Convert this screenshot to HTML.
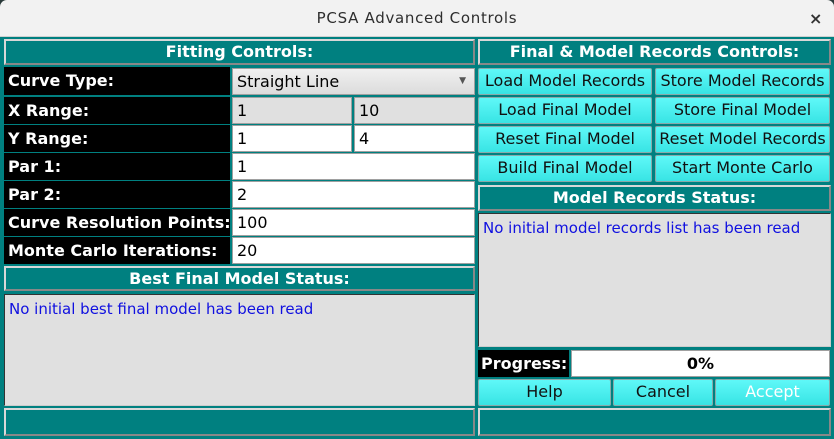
<!DOCTYPE html>
<html><head><style>
*{box-sizing:border-box;margin:0;padding:0}
body{width:834px;height:439px;overflow:hidden;background:#2a3a3a;font-family:"DejaVu Sans","Liberation Sans",sans-serif;font-size:16px;position:relative}
.a{position:absolute}
#title{left:0;top:0;width:834px;height:37px;background:#f2f2f2;border-radius:7px 7px 0 0;border-bottom:1px solid #d0d0d0;text-align:center;line-height:37px;font-size:15px;color:#2e2e2e;letter-spacing:0.7px}
#body{left:0;top:37px;width:834px;height:402px;background:#008080}
.hdr{background:#008080;border:2px solid #d8d8d8;border-right-color:#888;border-bottom-color:#888;color:#fff;font-weight:bold;text-align:center;line-height:21px}
.lbl{background:#000;color:#fff;font-weight:bold;padding-left:4px;line-height:27px;font-size:16px;white-space:nowrap}
.in{background:#fff;border:1px solid #a0a0a0;padding-left:4px;line-height:25px;color:#000}
.gr{background:#e0e0e0}
.btn{background:linear-gradient(#5ff8f8,#38e4e4);border:1px solid #8aa;border-radius:2px;text-align:center;line-height:24px;color:#111;white-space:nowrap}
.ta{background:#e0e0e0;border:1px solid #333;border-right-color:#ccc;border-bottom-color:#ccc;color:#1010e0;padding:5px 4px;font-size:15px}
.box{border:2px solid #d8d8d8;border-right-color:#888;border-bottom-color:#888}
</style></head><body>
<div class="a" id="title">PCSA Advanced Controls</div>
<div class="a" style="left:809px;top:9px;font-size:16px;font-weight:bold;color:#333">×</div>
<div class="a" id="body"></div>

<div class="a hdr" style="left:4px;top:39px;width:471px;height:26px">Fitting Controls:</div>
<div class="a lbl" style="left:4px;top:67px;width:226px;height:28px">Curve Type:</div>
<div class="a in" style="left:232px;top:68px;width:243px;height:27px;background:linear-gradient(#f0f0f0,#dcdcdc)">Straight Line<span style="position:absolute;right:8px;top:0;font-size:9px;color:#555">▼</span></div>
<div class="a lbl" style="left:4px;top:97px;width:226px;height:27px">X Range:</div>
<div class="a in gr" style="left:232px;top:97px;width:120px;height:27px">1</div>
<div class="a in gr" style="left:354px;top:97px;width:121px;height:27px">10</div>
<div class="a lbl" style="left:4px;top:125px;width:226px;height:27px">Y Range:</div>
<div class="a in" style="left:232px;top:125px;width:120px;height:27px">1</div>
<div class="a in" style="left:354px;top:125px;width:121px;height:27px">4</div>
<div class="a lbl" style="left:4px;top:153px;width:226px;height:27px">Par 1:</div>
<div class="a in" style="left:232px;top:153px;width:243px;height:27px">1</div>
<div class="a lbl" style="left:4px;top:181px;width:226px;height:27px">Par 2:</div>
<div class="a in" style="left:232px;top:181px;width:243px;height:27px">2</div>
<div class="a lbl" style="left:4px;top:209px;width:226px;height:27px">Curve Resolution Points:</div>
<div class="a in" style="left:232px;top:209px;width:243px;height:27px">100</div>
<div class="a lbl" style="left:4px;top:237px;width:226px;height:27px">Monte Carlo Iterations:</div>
<div class="a in" style="left:232px;top:237px;width:243px;height:27px">20</div>
<div class="a hdr" style="left:4px;top:266px;width:471px;height:25px">Best Final Model Status:</div>
<div class="a ta" style="left:4px;top:294px;width:471px;height:112px">No initial best final model has been read</div>
<div class="a box" style="left:4px;top:408px;width:471px;height:28px"></div>

<div class="a hdr" style="left:478px;top:39px;width:353px;height:26px">Final &amp; Model Records Controls:</div>
<div class="a btn" style="left:478px;top:68px;width:174px;height:27px">Load Model Records</div>
<div class="a btn" style="left:655px;top:68px;width:175px;height:27px">Store Model Records</div>
<div class="a btn" style="left:478px;top:97px;width:174px;height:27px">Load Final Model</div>
<div class="a btn" style="left:655px;top:97px;width:175px;height:27px">Store Final Model</div>
<div class="a btn" style="left:478px;top:126px;width:174px;height:27px">Reset Final Model</div>
<div class="a btn" style="left:655px;top:126px;width:175px;height:27px">Reset Model Records</div>
<div class="a btn" style="left:478px;top:155px;width:174px;height:27px">Build Final Model</div>
<div class="a btn" style="left:655px;top:155px;width:175px;height:27px">Start Monte Carlo</div>
<div class="a hdr" style="left:478px;top:185px;width:353px;height:26px">Model Records Status:</div>
<div class="a ta" style="left:478px;top:213px;width:353px;height:134px">No initial model records list has been read</div>
<div class="a lbl" style="left:478px;top:350px;width:91px;height:27px;padding-left:3px">Progress:</div>
<div class="a in" style="left:571px;top:350px;width:259px;height:27px;text-align:center;font-weight:bold;padding:0">0%</div>
<div class="a btn" style="left:478px;top:379px;width:133px;height:27px">Help</div>
<div class="a btn" style="left:613px;top:379px;width:100px;height:27px">Cancel</div>
<div class="a btn" style="left:715px;top:379px;width:115px;height:27px;color:#fff">Accept</div>
<div class="a box" style="left:478px;top:408px;width:353px;height:28px"></div>
</body></html>
